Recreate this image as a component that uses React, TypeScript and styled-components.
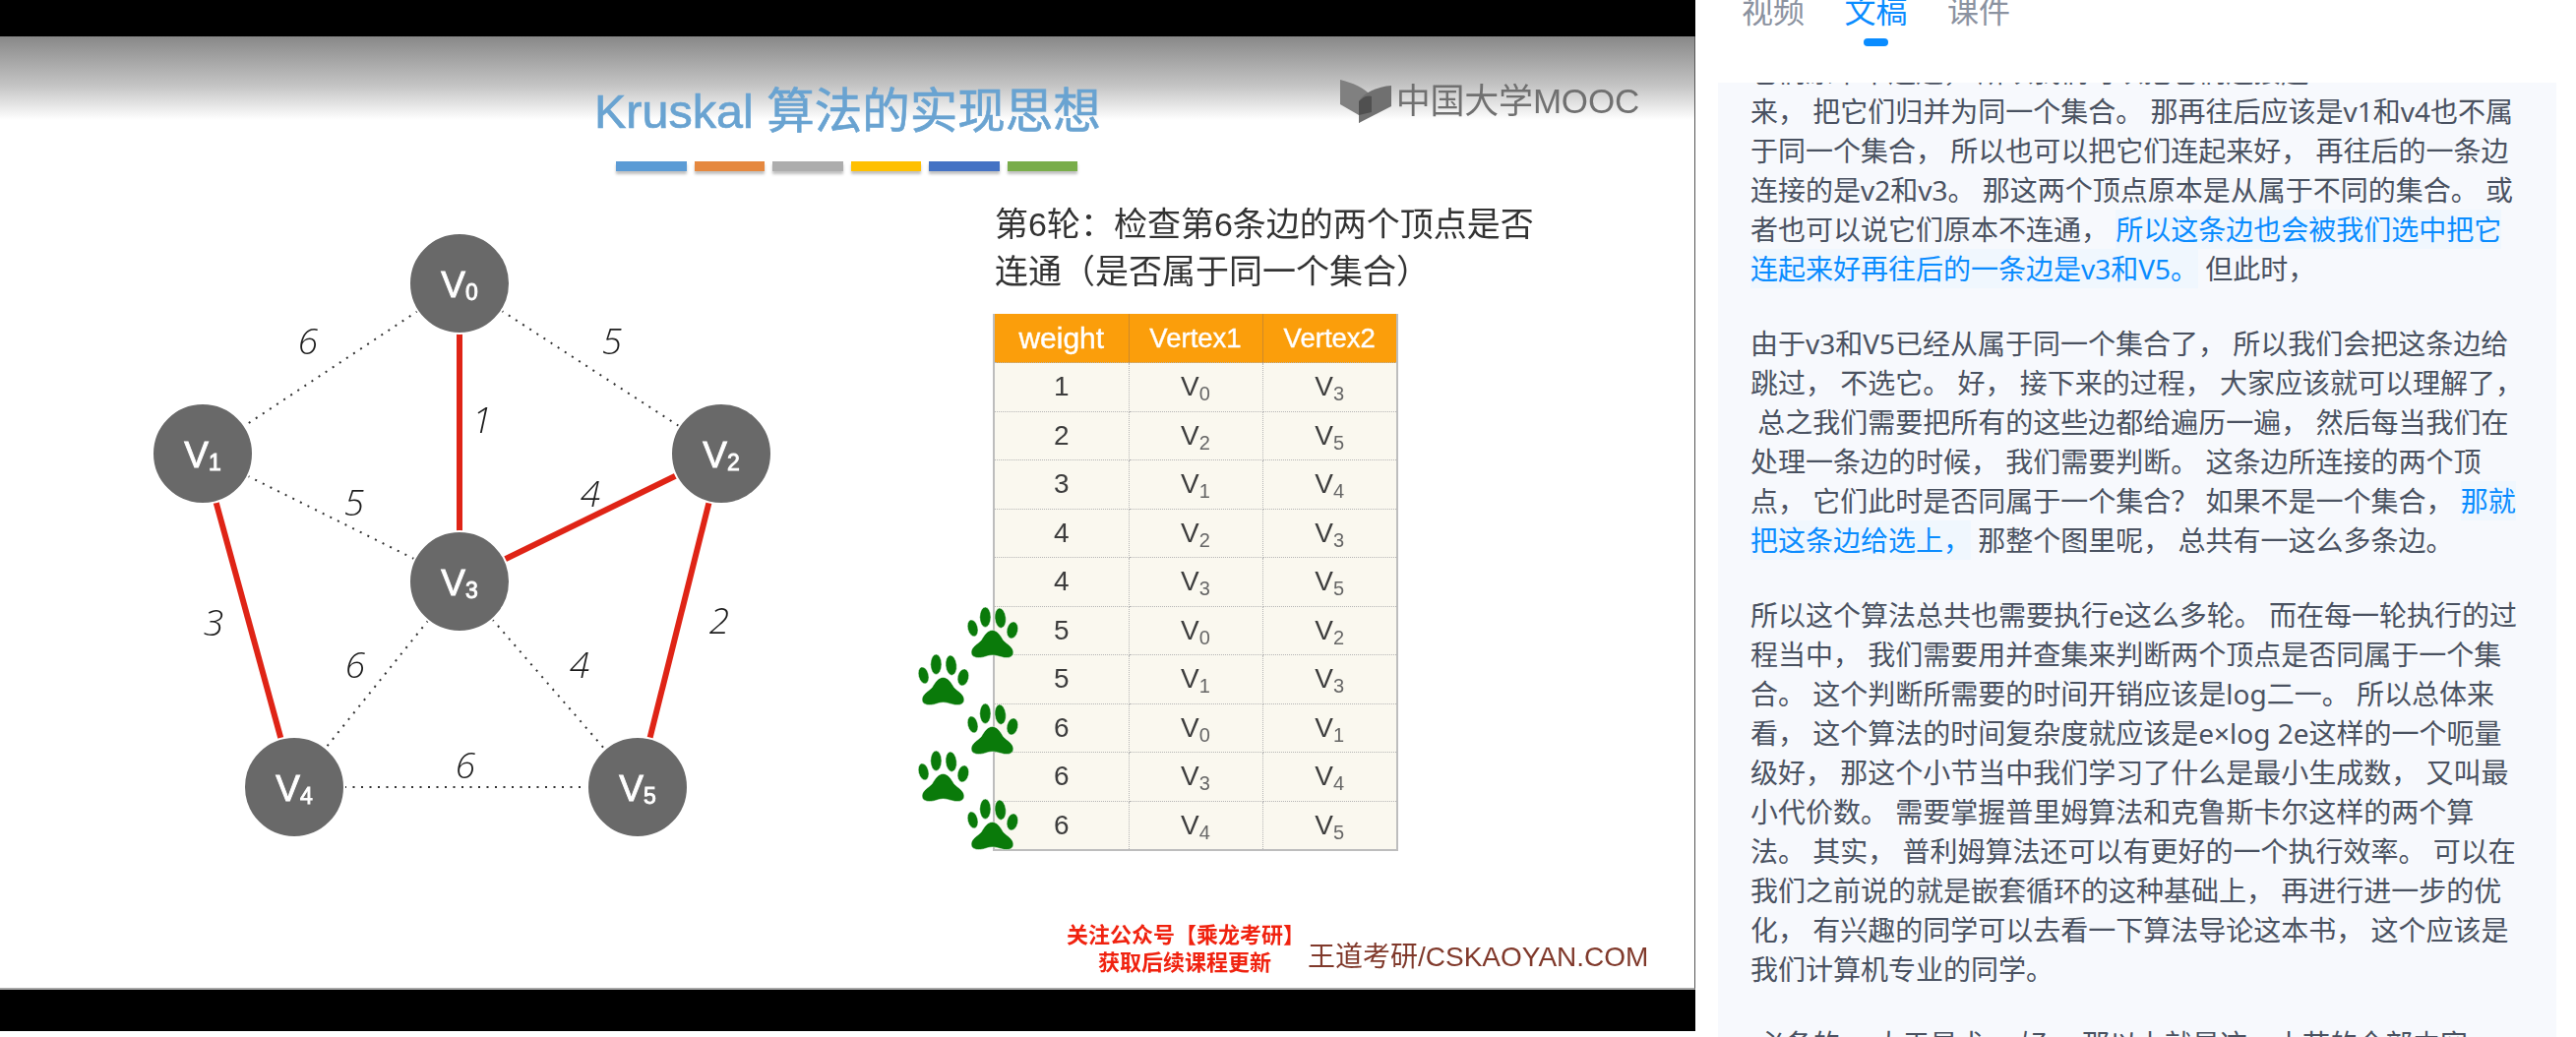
import React from "react";
import styled, { createGlobalStyle } from "styled-components";

const CJK = `"Noto Sans", "Noto Sans CJK SC", sans-serif`;
const SLIDE = `"Liberation Sans", "Noto Sans CJK SC", sans-serif`;

const Global = createGlobalStyle`
  html, body { margin: 0; padding: 0; background: #fff; }
  body { width: 2618px; height: 1054px; overflow: hidden; font-family: ${CJK}; }
`;

const Page = styled.div`
  display: flex;
  width: 2618px;
  height: 1054px;
  overflow: hidden;
  background: #fff;
`;

const VideoColumn = styled.section`
  width: 1723px;
  flex: none;
  display: flex;
  flex-direction: column;
`;

const BlackBar = styled.div<{ $h: number }>`
  height: ${(p) => p.$h}px;
  background: #000;
  flex: none;
`;

const Slide = styled.div`
  height: 969px;
  box-sizing: border-box;
  flex: none;
  border-right: 1px solid #555;
  border-bottom: 2px solid #a8a8a8;
  background: linear-gradient(#888 0, #c4c4c4 50px, #fff 85px, #fff 100%);
  font-family: ${SLIDE};
  filter: blur(0.5px);
`;

const SlideHeader = styled.header`
  display: flex;
  align-items: flex-start;
  padding: 46px 56px 0 604px;
`;

const TitleBlock = styled.div`
  display: flex;
  flex-direction: column;
`;

const Title = styled.h1`
  margin: 0;
  font-size: 48.5px;
  line-height: 60px;
  font-weight: 400;
  color: #69a3d1;
  -webkit-text-stroke: 0.7px #69a3d1;
  white-space: nowrap;
`;

const Stripes = styled.div`
  display: flex;
  gap: 8px;
  margin: 21px 0 0 22px;
`;

const Stripe = styled.span<{ $c: string }>`
  width: 71.5px;
  height: 10px;
  background: ${(p) => p.$c};
  box-shadow: 0 3px 3px rgba(0, 0, 0, 0.25);
`;

const Logo = styled.div`
  margin: -2px 0 0 auto;
  display: flex;
  align-items: center;
  gap: 5px;
  color: #707070;
  font-size: 35px;
  line-height: 44px;
  white-space: nowrap;
  letter-spacing: -0.2px;
`;

const SlideBody = styled.div`
  display: flex;
  height: 660px;
  margin-top: 29px;
`;

const GraphSvg = styled.svg`
  width: 1009px;
  height: 660px;
  flex: none;
  display: block;
`;

const RightColumn = styled.div`
  width: 410px;
  flex: none;
  position: relative;
`;

const Caption = styled.p`
  margin: 1px 0 19px 2px;
  font-size: 34px;
  line-height: 48px;
  color: #333;
  white-space: nowrap;
`;

const Table = styled.table`
  border-collapse: collapse;
  table-layout: fixed;
  width: 410px;
  background: #faf8ef;
  border: 2px solid #bdbdbd;
  border-top: 0;
`;

const HeadCell = styled.th<{ $big?: boolean }>`
  height: 49px;
  padding: 0;
  background: #fb9e0b;
  color: #fff;
  font-weight: 400;
  font-size: ${(p) => (p.$big ? 30 : 27.5)}px;
  -webkit-text-stroke: 0.4px #fff;
  text-align: center;
  border-right: 1px solid #cf8a2a;
  &:last-child { border-right: 0; }
`;

const Cell = styled.td`
  height: 49.5px;
  box-sizing: border-box;
  padding: 0;
  text-align: center;
  font-size: 28px;
  color: #3d3d3d;
  border: 1px dotted #b5b5b5;
  &:first-child { border-left: 0; }
  &:last-child { border-right: 0; }
`;

const Sub = styled.sub`
  font-size: 20px;
  color: #666;
  line-height: 0;
  vertical-align: -5px;
`;

const PawMark = styled.svg<{ $top: number; $left: number }>`
  position: absolute;
  top: ${(p) => p.$top}px;
  left: ${(p) => p.$left}px;
  width: 52px;
  height: 52px;
`;

const SlideFooter = styled.footer`
  display: flex;
  align-items: flex-end;
  gap: 5px;
  margin-top: 74px;
  padding-left: 1084px;
`;

const Promo = styled.div`
  width: 240px;
  text-align: center;
  color: #f0220f;
  font-size: 22px;
  line-height: 28px;
  font-weight: 700;
  white-space: nowrap;
`;

const Brand = styled.div`
  color: #80392b;
  font-size: 28px;
  line-height: 40px;
  white-space: nowrap;
`;

const Side = styled.aside`
  flex: none;
  width: 852px;
  margin-left: 23px;
  display: flex;
  flex-direction: column;
`;

const Tabs = styled.nav`
  height: 84px;
  flex: none;
  display: flex;
  gap: 40.5px;
  padding-left: 24px;
  box-sizing: border-box;
  overflow: hidden;
`;

const Tab = styled.div<{ $active?: boolean }>`
  margin-top: -5px;
  display: flex;
  flex-direction: column;
  align-items: center;
  font-size: 32px;
  line-height: 32px;
  color: ${(p) => (p.$active ? "#0a8cff" : "#8b92a0")};
`;

const TabMark = styled.i`
  width: 25px;
  height: 8px;
  margin-top: 12px;
  border-radius: 4px;
  background: #0a8cff;
`;

const Transcript = styled.div`
  flex: 1;
  min-height: 0;
  overflow: hidden;
  background: #f7f9fd;
  padding: 0 33px;
`;

const Scroller = styled.div`
  margin-top: -31px;
`;

const Para = styled.p`
  margin: 0 0 36px;
  font-size: 28px;
  line-height: 40px;
  color: #4a5261;
  white-space: pre;
`;

const Mark = styled.span`
  color: #0a8cff;
  background: #f0f7fe;
  padding: 1px 0;
`;

const stripes = ["#5b9bd5", "#e5883f", "#adadad", "#ffc000", "#4472c4", "#79ad4a"];

const nodes = [
  { n: 0, x: 467, y: 288 },
  { n: 1, x: 206, y: 461 },
  { n: 2, x: 733, y: 461 },
  { n: 3, x: 467, y: 591 },
  { n: 4, x: 299, y: 800 },
  { n: 5, x: 648, y: 800 },
];

const dotted = [
  [0, 1],
  [0, 2],
  [1, 3],
  [3, 4],
  [3, 5],
  [4, 5],
];
const chosen = [
  [0, 3],
  [1, 4],
  [2, 3],
  [2, 5],
];

const weights = [
  { t: "6", x: 313, y: 347 },
  { t: "5", x: 622, y: 347 },
  { t: "1", x: 490, y: 427 },
  { t: "5", x: 360, y: 511 },
  { t: "4", x: 600, y: 502 },
  { t: "3", x: 217, y: 633 },
  { t: "2", x: 731, y: 631 },
  { t: "6", x: 361, y: 676 },
  { t: "4", x: 589, y: 676 },
  { t: "6", x: 473, y: 778 },
];

const rows: [number, number, number][] = [
  [1, 0, 3],
  [2, 2, 5],
  [3, 1, 4],
  [4, 2, 3],
  [4, 3, 5],
  [5, 0, 2],
  [5, 1, 3],
  [6, 0, 1],
  [6, 3, 4],
  [6, 4, 5],
];

const paws = [
  { top: 414, left: -26 },
  { top: 462, left: -76 },
  { top: 512, left: -26 },
  { top: 560, left: -76 },
  { top: 609, left: -26 },
];

const Paw = ({ top, left }: { top: number; left: number }) => (
  <PawMark $top={top} $left={left} viewBox="0 0 51 51">
    <g fill="#0a7a0a" stroke="#fff" strokeWidth="0.5">
      <ellipse cx="5.5" cy="21" rx="5" ry="8.5" transform="rotate(-14 5.5 21)" />
      <ellipse cx="18" cy="10" rx="5.5" ry="10" />
      <ellipse cx="33" cy="11" rx="5.5" ry="10" transform="rotate(-6 33 11)" />
      <ellipse cx="45" cy="23" rx="5.5" ry="8.5" transform="rotate(12 45 23)" />
      <path d="M25 23 C30 23 33 28 36 33 C40 37 46 40 46 45 C46 50 41 51 37 50.5 C32 49.5 29 48 25 48 C21 48 18 50 13 50.5 C8 51 4 49 4 45 C4 40 10 37 14 33 C17 28 20 23 25 23 Z" />
    </g>
  </PawMark>
);

const Graph = () => (
  <GraphSvg viewBox="0 203 1009 660">
    {dotted.map(([a, b]) => (
      <line
        key={`d${a}${b}`}
        x1={nodes[a].x}
        y1={nodes[a].y}
        x2={nodes[b].x}
        y2={nodes[b].y}
        stroke="#333"
        strokeWidth="2"
        strokeDasharray="2 6.5"
      />
    ))}
    {chosen.map(([a, b]) => (
      <line
        key={`c${a}${b}`}
        x1={nodes[a].x}
        y1={nodes[a].y}
        x2={nodes[b].x}
        y2={nodes[b].y}
        stroke="#df2416"
        strokeWidth="6"
      />
    ))}
    {nodes.map((v) => (
      <g key={v.n}>
        <circle cx={v.x} cy={v.y} r="51" fill="#696969" stroke="#fff" strokeWidth="2" />
        <text x={v.x} y={v.y + 14} textAnchor="middle" fill="#fff" fontSize="37" fontFamily="Liberation Sans" stroke="#fff" strokeWidth="0.9">
          V
          <tspan fontSize="23" dy="3">
            {v.n}
          </tspan>
        </text>
      </g>
    ))}
    {weights.map((w, i) => (
      <text key={i} x={w.x} y={w.y + 13} textAnchor="middle" fontSize="37" fontStyle="italic" fontWeight="300" fontFamily="Open Sans" fill="#1c1c1c">
        {w.t}
      </text>
    ))}
  </GraphSvg>
);

export default function App() {
  return (
    <Page>
      <Global />
      <VideoColumn>
        <BlackBar $h={37} />
        <Slide>
          <SlideHeader>
            <TitleBlock>
              <Title>Kruskal 算法的实现思想</Title>
              <Stripes>
                {stripes.map((c) => (
                  <Stripe key={c} $c={c} />
                ))}
              </Stripes>
            </TitleBlock>
            <Logo>
              <svg width="52" height="44" viewBox="0 0 52 44">
                <path d="M0 0 C12 3 25 8 32 17 L32 33 L19 44 L19 36 L0 25 Z" fill="#808080" />
                <path d="M19 44 L19 22 C24 13 38 7 52 6 L52 27 Z" fill="#707070" />
                <path d="M19 36 L19 22 C22 19 27 15 32 17 L32 33 Z" fill="#505050" />
              </svg>
              <span>中国大学MOOC</span>
            </Logo>
          </SlideHeader>
          <SlideBody>
            <Graph />
            <RightColumn>
              <Caption>
                第6轮：检查第6条边的两个顶点是否
                <br />
                连通（是否属于同一个集合）
              </Caption>
              <Table>
                <colgroup>
                  <col width="137" />
                  <col width="136" />
                  <col width="137" />
                </colgroup>
                <thead>
                  <tr>
                    <HeadCell $big>weight</HeadCell>
                    <HeadCell>Vertex1</HeadCell>
                    <HeadCell>Vertex2</HeadCell>
                  </tr>
                </thead>
                <tbody>
                  {rows.map(([w, a, b], i) => (
                    <tr key={i}>
                      <Cell>{w}</Cell>
                      <Cell>
                        V<Sub>{a}</Sub>
                      </Cell>
                      <Cell>
                        V<Sub>{b}</Sub>
                      </Cell>
                    </tr>
                  ))}
                </tbody>
              </Table>
              {paws.map((p) => (
                <Paw key={p.top} top={p.top} left={p.left} />
              ))}
            </RightColumn>
          </SlideBody>
          <SlideFooter>
            <Promo>
              关注公众号【乘龙考研】
              <br />
              获取后续课程更新
            </Promo>
            <Brand>王道考研/CSKAOYAN.COM</Brand>
          </SlideFooter>
        </Slide>
        <BlackBar $h={42} />
      </VideoColumn>
      <Side>
        <Tabs>
          <Tab>视频</Tab>
          <Tab $active>
            文稿
            <TabMark />
          </Tab>
          <Tab>课件</Tab>
        </Tabs>
        <Transcript>
          <Scroller>
            <Para>
              {"它们原本不连通， 所以我们可以把它们连接起\n来， 把它们归并为同一个集合。 那再往后应该是v1和v4也不属\n于同一个集合， 所以也可以把它们连起来好， 再往后的一条边\n连接的是v2和v3。 那这两个顶点原本是从属于不同的集合。 或\n者也可以说它们原本不连通， "}
              <Mark>{"所以这条边也会被我们选中把它\n连起来好再往后的一条边是v3和V5。"}</Mark>
              {" 但此时，"}
            </Para>
            <Para>
              {"由于v3和V5已经从属于同一个集合了， 所以我们会把这条边给\n跳过， 不选它。 好， 接下来的过程， 大家应该就可以理解了，\n 总之我们需要把所有的这些边都给遍历一遍， 然后每当我们在\n处理一条边的时候， 我们需要判断。 这条边所连接的两个顶\n点， 它们此时是否同属于一个集合？ 如果不是一个集合， "}
              <Mark>{"那就\n把这条边给选上，"}</Mark>
              {" 那整个图里呢， 总共有一这么多条边。"}
            </Para>
            <Para>
              {"所以这个算法总共也需要执行e这么多轮。 而在每一轮执行的过\n程当中， 我们需要用并查集来判断两个顶点是否同属于一个集\n合。 这个判断所需要的时间开销应该是log二一。 所以总体来\n看， 这个算法的时间复杂度就应该是e×log 2e这样的一个呃量\n级好， 那这个小节当中我们学习了什么是最小生成数， 又叫最\n小代价数。 需要掌握普里姆算法和克鲁斯卡尔这样的两个算\n法。 其实， 普利姆算法还可以有更好的一个执行效率。 可以在\n我们之前说的就是嵌套循环的这种基础上， 再进行进一步的优\n化， 有兴趣的同学可以去看一下算法导论这本书， 这个应该是\n我们计算机专业的同学。"}
            </Para>
            <Para>{" 必备的， 大于是术。 好， 那以上就是这一小节的全部内容。"}</Para>
          </Scroller>
        </Transcript>
      </Side>
    </Page>
  );
}
